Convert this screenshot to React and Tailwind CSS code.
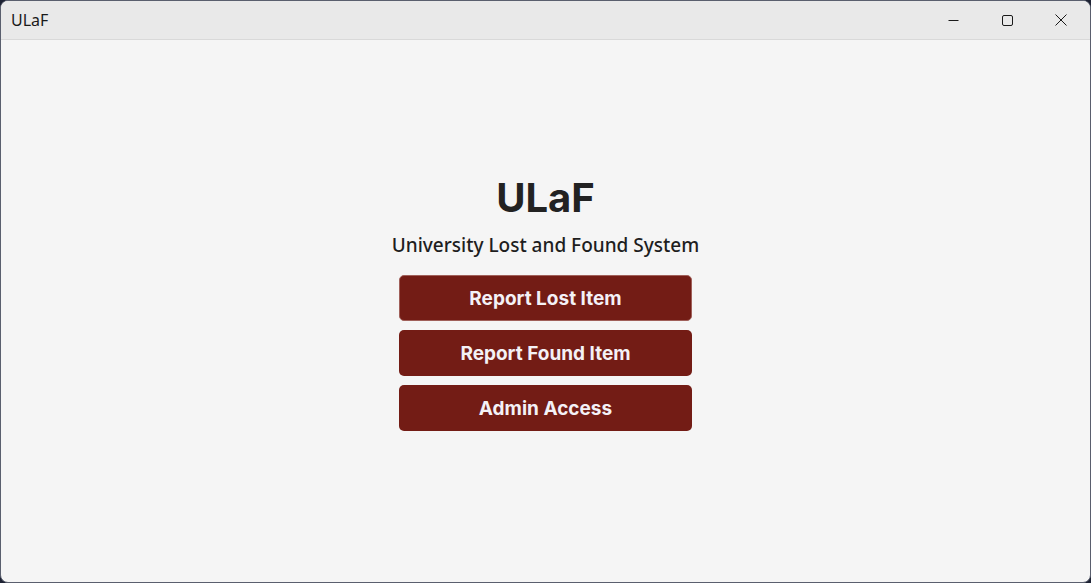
export default function App() {
  const buttons = ["Report Lost Item", "Report Found Item", "Admin Access"];
  return (
    <div className="w-[1091px] h-[583px] bg-[#1d2233] overflow-hidden">
      <div className="w-full h-full flex flex-col bg-[#f5f5f5] rounded-[8px] border border-[#5a5f6e] overflow-hidden">
        <div className="h-[39px] shrink-0 flex items-center justify-between bg-[#e9e9e9] border-b border-[#d9d9d9]">
          <span className="pl-[10px] text-[16px] text-[#1a1a1a] font-['Noto_Sans',sans-serif]">ULaF</span>
          <div className="flex h-full">
            <div className="w-[54px] h-full flex items-center justify-center">
              <svg width="11" height="11" viewBox="0 0 11 11">
                <path d="M0.5 5.5H10.5" stroke="#1a1a1a" strokeWidth="1" />
              </svg>
            </div>
            <div className="w-[54px] h-full flex items-center justify-center">
              <svg width="11" height="11" viewBox="0 0 11 11">
                <rect x="0.5" y="0.5" width="10" height="10" rx="1.5" fill="none" stroke="#1a1a1a" strokeWidth="1" />
              </svg>
            </div>
            <div className="w-[56px] h-full flex items-center justify-center pr-[2px]">
              <svg width="12" height="12" viewBox="0 0 12 12">
                <path d="M0.5 0.5L11.5 11.5M11.5 0.5L0.5 11.5" stroke="#1a1a1a" strokeWidth="1" />
              </svg>
            </div>
          </div>
        </div>
        <div className="flex-1 flex flex-col items-center pt-[134px]">
          <h1 className="text-[40px] leading-[48px] font-bold text-[#222] font-['Inter',sans-serif]">ULaF</h1>
          <p className="mt-[11px] text-[19px] leading-[24px] text-[#1e1e1e] font-['Noto_Sans',sans-serif] font-medium">
            University Lost and Found System
          </p>
          <div className="mt-[18px] flex flex-col gap-[9px]">
            {buttons.map((b, i) => (
              <button
                key={b}
                className={`w-[293px] h-[46px] pt-[2px] rounded-[5px] bg-[#731c15] text-[#f4f1f6] text-[19px] font-bold font-['Inter',sans-serif] ${
                  i === 0 ? "border border-[#a0605a]" : ""
                }`}
              >
                {b}
              </button>
            ))}
          </div>
        </div>
      </div>
    </div>
  );
}
